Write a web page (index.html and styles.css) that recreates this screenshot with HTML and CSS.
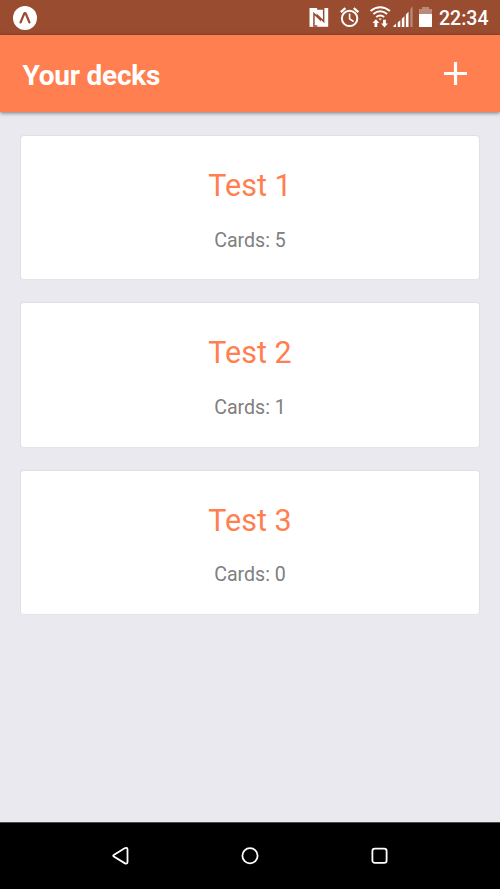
FILE: index.html
```html
<!DOCTYPE html>
<html lang="en">
<head>
<meta charset="utf-8">
<title>Your decks</title>
<link rel="stylesheet" href="styles.css">
</head>
<body>
<div class="screen">
  <div class="status">
    <svg class="app-icon" width="24" height="24" viewBox="0 0 24 24">
      <circle cx="12" cy="12" r="12" fill="#fff"/>
      <path d="M7.6 16.4L11 8.1q1-1.7 2 0l3.4 8.3" fill="none" stroke="#994c30" stroke-width="2.3" stroke-linecap="round" stroke-linejoin="round"/>
    </svg>
    <div class="indicators">
      <svg width="133" height="35" viewBox="300 0 133 35" fill="none">
        <path fill="#fff" d="M309.5 8h18.7v18.8h-18.7z"/>
        <path d="M313.2 11.8L321 19.6v1.8l-6.3-5.9v9.8h2.6v1.5h-4.1zM324.4 23.2l-7.8-7.8v-1.8l6.3 5.9V9.7h-5.8V8h7.3z" fill="#994c30"/>
        <path d="M315.3 8l7.6 7.5v2.7l-7.6-7.5z" fill="#fff"/>
        <circle cx="349.6" cy="18.4" r="7.7" stroke="#fff" stroke-width="2"/>
        <path d="M349.6 13.5v5.4l4 2.6" stroke="#fff" stroke-width="1.6"/>
        <path d="M340.8 12.2l4.6-4M358.4 12.2l-4.6-4" stroke="#fff" stroke-width="2.2"/>
        <path d="M370.5 11q9.7-7.4 19.4 0M373.3 14q6.9-5.4 13.8 0M376.2 17q4-3 8 0" stroke="#fff" stroke-width="2"/>
        <path fill="#fff" d="M375.9 19.2l3.4 3.9h-2v3.9h-2.8v-3.9h-2zM384.5 27.4l-3.4-3.9h2v-3.8h2.8v3.8h2zM378.6 18.6h3l-1.5 2z"/>
        <path fill="#fff" d="M393.5 27v-1.3l2.6-1.9V27zM397.7 22.6l2.6-2.4V27h-2.6zM401.8 18.8l2.6-2.6V27h-2.6zM405.9 14.4l2.6-2.6V27h-2.6z"/>
        <path fill="#fff" opacity=".35" d="M410.4 9l2.2-2.7V27h-2.2zM422 7h7v2h3v5.2h-13V9h3z"/>
        <path fill="#fff" d="M419 14h13v13h-13z"/>
      </svg>
      <span class="clock">22:34</span>
    </div>
  </div>
  <header class="header">
    <h1 class="title">Your decks</h1>
    <svg width="23" height="23" viewBox="0 0 23 23"><path d="M11.5 0v23M0 11.5h23" stroke="#fff" stroke-width="3.2"/></svg>
  </header>
  <main class="decks">
    <section class="card"><h2 class="name">Test 1</h2><p class="count">Cards: 5</p></section>
    <section class="card"><h2 class="name">Test 2</h2><p class="count">Cards: 1</p></section>
    <section class="card"><h2 class="name">Test 3</h2><p class="count">Cards: 0</p></section>
  </main>
  <nav class="nav">
    <svg width="18" height="20" viewBox="0 0 18 20"><path d="M1.8 8.9L12.6 2.3q2.6-1.3 2.9 1v12.8q-.3 2.3-2.9 1L1.8 10.5q-1.2-.8 0-1.6z"/></svg>
    <svg width="18" height="20" viewBox="0 0 18 20"><circle cx="9" cy="9.7" r="7.6"/></svg>
    <svg width="18" height="20" viewBox="0 0 18 20"><rect x="1.4" y="2.6" width="14.2" height="14.2" rx="2.4"/></svg>
  </nav>
</div>
</body>
</html>
```
FILE: styles.css
```css
body {
  margin: 0;
  font-family: Roboto, sans-serif;
}
.screen {
  display: flex;
  flex-direction: column;
  height: 889px;
  background: #e9e9ef;
}
.status {
  display: flex;
  justify-content: space-between;
  align-items: center;
  height: 35px;
  padding: 0 11px 0 13px;
  background: #994c30;
}
.indicators {
  display: flex;
  align-items: center;
}
.clock {
  width: 50px;
  margin-left: 6px;
  padding-top: 2px;
  font-size: 19.5px;
  font-weight: 500;
  line-height: 33px;
  color: #fff;
  white-space: nowrap;
}
.header {
  display: flex;
  justify-content: space-between;
  align-items: center;
  box-sizing: border-box;
  height: 77px;
  padding: 0 33px 0 22.5px;
  background: #ff7f50;
  box-shadow: 0 1px 4px rgba(0, 0, 0, .5);
}
.title {
  margin: 5px 0 0;
  font-size: 28px;
  font-weight: 700;
  line-height: 36px;
  letter-spacing: -.23px;
  color: #fff;
}
.decks {
  display: flex;
  flex: 1;
  flex-direction: column;
  gap: 22px;
  padding: 23px 20px 0;
}
.card {
  box-sizing: border-box;
  height: 145.3px;
  padding-top: 31px;
  border: 1px solid #dfdfe4;
  border-bottom-color: #e3e3e8;
  border-radius: 4px;
  background: #fff;
  text-align: center;
}
.name {
  margin: 0;
  font-size: 30.5px;
  font-weight: 400;
  line-height: 38.6px;
  color: #ff7f50;
}
.count {
  margin: 22.1px 0 0;
  font-size: 19.6px;
  line-height: 26px;
  color: #808080;
}
.nav {
  display: flex;
  justify-content: space-between;
  align-items: center;
  box-sizing: border-box;
  height: 67px;
  padding: 0 111.5px;
  border-top: 1px solid #4d4d50;
  background: #000;
}
.nav svg {
  fill: none;
  stroke: #fff;
  stroke-width: 1.8;
}
```
